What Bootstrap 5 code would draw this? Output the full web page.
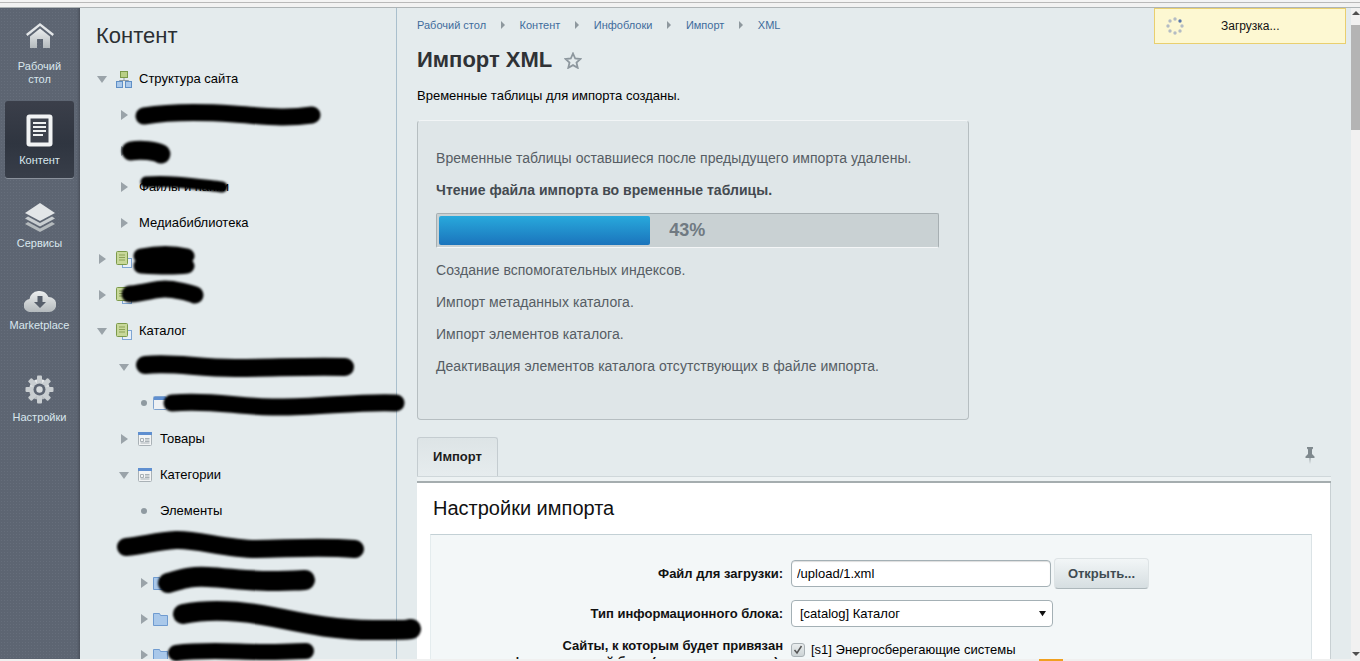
<!DOCTYPE html>
<html lang="ru">
<head>
<meta charset="utf-8">
<title>Импорт XML</title>
<link href="https://cdn.jsdelivr.net/npm/bootstrap@5.3.0/dist/css/bootstrap.min.css" rel="stylesheet">
<style>
html,body{height:661px;overflow:hidden;margin:0;background:#fff;font-family:"Liberation Sans",Arial,sans-serif;font-size:13px;color:#000}
.shell{height:661px;position:relative;display:flex;flex-direction:column}
.chrome-top{height:8px;flex:none;background:linear-gradient(#f4f4f4 0,#f4f4f4 2px,#b9b9b9 2px,#b9b9b9 3px,#f2f2f2 3px,#f2f2f2 7px,#aeb4b6 7px)}
.stage{height:651px;flex:none;display:flex;overflow:hidden}
.chrome-bottom{height:2px;flex:none;background:#f0f0f0}
.rail{width:80px;flex:none;background-color:#5d6572;background-image:radial-gradient(#666e7b 1px,transparent 1px);background-size:3px 3px;box-shadow:inset -3px 0 3px -2px #444b56;padding:5px}
.rail-item{width:69px;color:#d9e7ee;font-size:11px;line-height:13px;text-align:center;display:flex;flex-direction:column;align-items:center;border-radius:3px}
.rail-item svg{display:block}
.r1{height:88px;padding-top:9px}.r1 svg{margin-bottom:11px}
.r2{height:77px;padding-top:13px;background:linear-gradient(#3b3f4a,#2f3540 55%,#383e49);box-shadow:0 1px 0 #8a919b}.r2 svg{margin-bottom:7px}
.r3{height:92px;padding-top:25px}.r3 svg{margin-bottom:5px}
.r4{height:88px;padding-top:18px}.r4 svg{margin-bottom:7px}
.r5{height:80px;padding-top:17px}.r5 svg{margin-bottom:7px}
.menu{width:317px;flex:none;background:#e4ebed;border-right:1px solid #a9bfcd;position:relative}
.menu-title{font-size:22px;line-height:26px;color:#2b2f33;padding:15px 0 12px 16px;margin:0;font-weight:400}
.node{height:36px;display:flex;align-items:center;font-size:13px;color:#000;white-space:nowrap}
.tw{width:10px;flex:none;display:flex;justify-content:center}
.ar{border-style:solid;border-color:transparent transparent transparent #9aa3a9;border-width:5px 0 5px 7px}
.ad{border-style:solid;border-color:#9aa3a9 transparent transparent;border-width:7px 5px 0}
.dot{width:6px;height:6px;border-radius:50%;background:#8f9aa1}
.lv0{padding-left:17px}.lv1{padding-left:39px}.lv2{padding-left:59px}
.node svg{flex:none}
.ml-icon{margin-left:9px;margin-right:7px}
.ml-icon2{margin-left:9px;margin-right:8px}
.ml-icon3{margin-left:4px}
.ml-text2{margin-left:10px}
.ml-text3{margin-left:11px}
.main{flex:1;min-width:0;background:#e4ebed;padding:0 20px;overflow:hidden}
.crumbs{display:flex;align-items:center;height:34px;font-size:11px;color:#3f6c9c;margin:0;padding:0;list-style:none}
.crumbs li{display:flex;align-items:center}
.crumbs li+li::before{content:"";border-style:solid;border-color:transparent transparent transparent #8e989e;border-width:4px 0 4px 4px;margin:0 15px 0 14.500px}
.h-title{font-size:22px;font-weight:700;line-height:26px;color:#2f3236;margin:5px 0 0;display:flex;align-items:center;gap:12px}
.created{margin:15px 0 0;line-height:16px;font-size:13px}
.box{width:552px;height:300px;margin-top:16px;background:#dfe6e8;border:1px solid #b6bec1;border-top-color:#f2f5f6;border-radius:4px;padding:29px 18px 0;font-size:14px;color:#565d64;letter-spacing:.04px}
.box p{margin:0 0 16px;line-height:16px}
.box .ph{font-weight:700;color:#444a50;margin-bottom:0}
.bar{width:503px;height:35px;margin:15px 0 14px;background:#c9d1d3;border:1px solid #a7afb2;border-bottom-color:#f4f6f7;border-radius:2px;padding:2px;display:flex;align-items:center}
.bar-fill{height:29px;background:linear-gradient(#28a9dc,#1b74bc);border-radius:2px}
.bar-txt{font-size:18px;font-weight:700;color:#707a82;margin-left:19px}
.tabs{width:914px;height:39px;margin-top:17px;display:flex;justify-content:space-between;align-items:stretch}
.tab1{width:81px;background:linear-gradient(#dde4e6,#e6ecee);border:1px solid #c4ccd0;border-bottom:0;border-radius:3px 3px 0 0;font-size:13px;font-weight:700;color:#1c1c1c;display:flex;align-items:center;justify-content:center}
.pin{margin:10px 16px 0 0}
.strip{height:7px;width:914px;background:#edf2f3;border-top:1px solid #cfd7da;border-bottom:2px solid #a5adaf}
.sheet{width:914px;height:200px;background:#fff;border-right:1px solid #c8d0d3;padding:0 18px 0 13px}
.sheet-h{font-size:20px;font-weight:400;line-height:24px;color:#111;margin:0;padding:13px 0 14px 3px}
.inner{background:#f3f7f8;border-top:1px solid #c3d0d5;border-right:1px solid #dbe3e6;border-left:1px solid #e4ecee;height:150px;padding-top:23px}
.frow{display:flex;align-items:center;gap:8px}
.frow label{width:352px;flex:none;text-align:right;font-weight:700;font-size:13px;line-height:16px;color:#111}
.form-control.fld{width:260px;height:27px;font-size:13px;padding:0 5px;border:1px solid #a4b0b5;border-radius:4px;color:#000;font-family:inherit;box-shadow:inset 0 1px 1px #ddd}
.btn.opn{width:95px;height:31px;margin-left:-5px;padding:0;font-size:13px;font-weight:700;color:#3f4b52;background:linear-gradient(#f2f6f7,#d6dee1);border:1px solid #dde3e5;border-bottom-color:#adb7bb;border-radius:4px}
.form-select.sel{width:262px;height:27px;font-size:13px;padding:0 8px;border:1px solid #a4b0b5;border-radius:4px;color:#000;background-position:right 6px center;background-size:7px;background-image:url("data:image/svg+xml,%3csvg xmlns='http://www.w3.org/2000/svg' viewBox='0 0 8 8'%3e%3cpath d='M0 1h8L4 7z' fill='%23111'/%3e%3c/svg%3e")}
.row-a{margin-bottom:11px}
.frow.row-c{align-items:flex-start;margin-top:1px}
.frow.row-c label{padding-left:37px}
.chk{display:flex;align-items:center;gap:6px;margin-top:4px;line-height:16px}
.box-c{width:14px;height:14px;border:1px solid #a9b1b5;border-radius:3px;background:linear-gradient(#e9edee,#cdd4d6);display:flex;align-items:center;justify-content:center}
.scrollbar{width:9px;flex:none;background:#f1f1f1;position:relative;display:flex;flex-direction:column;align-items:center}
.s-up{border-style:solid;border-color:transparent transparent #505050;border-width:0 4px 4px;margin-top:3px}
.s-thumb{width:9px;height:105px;background:#b4b4b4;margin-top:10px}
.s-dn{border-style:solid;border-color:#505050 transparent transparent;border-width:4px 4px 0;margin-top:auto;margin-bottom:3px}
.loading{position:absolute;left:1154px;top:8px;width:192px;height:36px;background:#fdf8d2;border:1px solid #e9cf6f;font-size:12px;color:#111;display:flex;align-items:center}
.loading svg{margin-left:11px}
.loading span{margin-left:37px}
.redact{position:absolute;left:0;top:0;pointer-events:none;filter:blur(.8px)}
.orange{position:absolute;left:1039px;top:659px;width:24px;height:2px;background:#f0a020}
</style>
</head>
<body>
<svg width="0" height="0" class="position-absolute"><defs>
  <linearGradient id="ig" x1="0" y1="0" x2="0" y2="1"><stop offset="0" stop-color="#eceeef"/><stop offset="1" stop-color="#b4babd"/></linearGradient>
</defs></svg>
<div class="shell">
  <div class="chrome-top"></div>
  <div class="stage">
    <nav class="rail">
      <div class="rail-item r1">
        <svg width="30" height="27" viewBox="0 0 30 27"><path d="M15 1 1 12l1.500 2L15 4l12.500 10 1.500-2z" fill="#e3e6e8"/><path d="M5 14.500 15 6.500l10 8V26H18V17h-6v9H5z" fill="url(#ig)"/></svg>
        <span>Рабочий<br>стол</span>
      </div>
      <div class="rail-item r2">
        <svg width="27" height="33" viewBox="0 0 27 33"><rect x="0.500" y="0.500" width="26" height="32" rx="3" fill="#f1f3f4"/><rect x="4.500" y="4.500" width="18" height="24" fill="#3d424d"/><path d="M7 9h13M7 13h13M7 17h13M7 21h10" stroke="#eef0f1" stroke-width="1.800"/></svg>
        <span>Контент</span>
      </div>
      <div class="rail-item r3">
        <svg width="32" height="29" viewBox="0 0 32 29"><path d="M16 18 1 10 16 0l15 10z" fill="#e3e6e8"/><path d="M4 13.500 1 15.500l15 8 15-8-3-2-12 6.500z" fill="#c9ced1"/><path d="M4 19 1 21l15 8 15-8-3-2-12 6.500z" fill="#b4babd"/></svg>
        <span>Сервисы</span>
      </div>
      <div class="rail-item r4">
        <svg width="32" height="24" viewBox="0 0 32 24"><path d="M7 24a6.500 6.500 0 0 1-1.500-13A10 10 0 0 1 24.500 9 7.500 7.500 0 0 1 25 24z" fill="url(#ig)"/><path d="M13.500 8h5v6h3.500L16 20l-6-6h3.500z" fill="#565e6b"/></svg>
        <span>Marketplace</span>
      </div>
      <div class="rail-item r5">
        <svg width="29" height="29" viewBox="0 0 29 29"><g fill="url(#ig)"><circle cx="14.500" cy="14.500" r="10.500"/></g><g fill="#c9ced1"><rect x="12" y="0.500" width="5" height="28" rx="1"/><rect x="12" y="0.500" width="5" height="28" rx="1" transform="rotate(45 14.500 14.500)"/><rect x="12" y="0.500" width="5" height="28" rx="1" transform="rotate(90 14.500 14.500)"/><rect x="12" y="0.500" width="5" height="28" rx="1" transform="rotate(135 14.500 14.500)"/></g><circle cx="14.500" cy="14.500" r="6" fill="#5d6572"/><circle cx="14.500" cy="14.500" r="3.200" fill="#d8dcde"/></svg>
        <span>Настройки</span>
      </div>
    </nav>

    <aside class="menu">
      <h2 class="menu-title">Контент</h2>
      <div class="node lv0"><span class="tw"><i class="ad"></i></span>
        <svg class="ml-icon" width="16" height="17" viewBox="0 0 16 17"><rect x="4.500" y="0.500" width="7" height="6" fill="#b9cf86" stroke="#7c9a4a"/><path d="M8 7v2.500M3.500 11V9.500h9V11" stroke="#8f9aa1" fill="none"/><rect x="0.500" y="10.500" width="6" height="6" fill="#a9c8ea" stroke="#5f8fc6"/><rect x="9.500" y="10.500" width="6" height="6" fill="#a9c8ea" stroke="#5f8fc6"/></svg>
        <span>Структура сайта</span></div>
      <div class="node lv1"><span class="tw"><i class="ar"></i></span></div>
      <div class="node lv1"><span class="tw"><i class="ar"></i></span></div>
      <div class="node lv1"><span class="tw"><i class="ar"></i></span><span class="ml-text2">Файлы и папки</span></div>
      <div class="node lv1"><span class="tw"><i class="ar"></i></span><span class="ml-text2">Медиабиблиотека</span></div>
      <div class="node lv0"><span class="tw"><i class="ar"></i></span>
        <svg class="ml-icon" width="16" height="17" viewBox="0 0 16 17"><rect x="6.500" y="7.500" width="9" height="9" fill="#e9f0f8" stroke="#7fa6d4"/><rect x="0.500" y="0.500" width="11" height="13" rx="1" fill="#c8d89a" stroke="#7c9a4a"/><path d="M3 4h6M3 6.500h6M3 9h6" stroke="#8ba257"/></svg></div>
      <div class="node lv0"><span class="tw"><i class="ar"></i></span>
        <svg class="ml-icon" width="16" height="17" viewBox="0 0 16 17"><rect x="6.500" y="7.500" width="9" height="9" fill="#e9f0f8" stroke="#7fa6d4"/><rect x="0.500" y="0.500" width="11" height="13" rx="1" fill="#c8d89a" stroke="#7c9a4a"/><path d="M3 4h6M3 6.500h6M3 9h6" stroke="#8ba257"/></svg></div>
      <div class="node lv0"><span class="tw"><i class="ad"></i></span>
        <svg class="ml-icon" width="16" height="17" viewBox="0 0 16 17"><rect x="6.500" y="7.500" width="9" height="9" fill="#e9f0f8" stroke="#7fa6d4"/><rect x="0.500" y="0.500" width="11" height="13" rx="1" fill="#c8d89a" stroke="#7c9a4a"/><path d="M3 4h6M3 6.500h6M3 9h6" stroke="#8ba257"/></svg>
        <span>Каталог</span></div>
      <div class="node lv1"><span class="tw"><i class="ad"></i></span></div>
      <div class="node lv2"><span class="tw"><i class="dot"></i></span>
        <svg class="ml-icon3" width="14" height="14" viewBox="0 0 14 14"><rect x="0.500" y="0.500" width="13" height="13" rx="1" fill="#eef1f3" stroke="#7fa3cf"/><rect x="1" y="1" width="12" height="3" fill="#5f8fd0"/></svg></div>
      <div class="node lv1"><span class="tw"><i class="ar"></i></span>
        <svg class="ml-icon2" width="14" height="14" viewBox="0 0 14 14"><rect x="0.500" y="0.500" width="13" height="13" rx="1" fill="#f2f4f5" stroke="#a9b1b6"/><rect x="0" y="0" width="14" height="3" fill="#5f8fd0"/><path d="M2.500 6.500h3v3h-3zM7 6.500h4.500M7 8h4.500M7 9.500h4.500M2.500 11h9" stroke="#a9b1b6" fill="none"/></svg>
        <span>Товары</span></div>
      <div class="node lv1"><span class="tw"><i class="ad"></i></span>
        <svg class="ml-icon2" width="14" height="14" viewBox="0 0 14 14"><rect x="0.500" y="0.500" width="13" height="13" rx="1" fill="#f2f4f5" stroke="#a9b1b6"/><rect x="0" y="0" width="14" height="3" fill="#5f8fd0"/><path d="M2.500 6.500h3v3h-3zM7 6.500h4.500M7 8h4.500M7 9.500h4.500M2.500 11h9" stroke="#a9b1b6" fill="none"/></svg>
        <span>Категории</span></div>
      <div class="node lv2"><span class="tw"><i class="dot"></i></span><span class="ml-text3">Элементы</span></div>
      <div class="node lv1"></div>
      <div class="node lv2"><span class="tw"><i class="ar"></i></span>
        <svg class="ml-icon3" width="15" height="14" viewBox="0 0 15 14"><path d="M.5 13.500V1.500h6l1 2h7v10z" fill="#a9c8ea" stroke="#6f9bd0"/></svg></div>
      <div class="node lv2"><span class="tw"><i class="ar"></i></span>
        <svg class="ml-icon3" width="15" height="14" viewBox="0 0 15 14"><path d="M.5 13.500V1.500h6l1 2h7v10z" fill="#a9c8ea" stroke="#6f9bd0"/></svg></div>
      <div class="node lv2"><span class="tw"><i class="ar"></i></span>
        <svg class="ml-icon3" width="15" height="14" viewBox="0 0 15 14"><path d="M.5 13.500V1.500h6l1 2h7v10z" fill="#a9c8ea" stroke="#6f9bd0"/></svg></div>
    </aside>

    <main class="main">
      <ol class="crumbs">
        <li>Рабочий стол</li><li>Контент</li><li>Инфоблоки</li><li>Импорт</li><li>XML</li>
      </ol>
      <h1 class="h-title">Импорт XML
        <svg width="18" height="17" viewBox="0 0 18 17"><path d="M9 1.500l2.200 5 5.300.5-4 3.600 1.200 5.200L9 13.100l-4.700 2.700 1.200-5.200-4-3.600 5.300-.5z" fill="none" stroke="#8d979e" stroke-width="1.800"/></svg>
      </h1>
      <p class="created">Временные таблицы для импорта созданы.</p>
      <div class="box">
        <p>Временные таблицы оставшиеся после предыдущего импорта удалены.</p>
        <p class="ph">Чтение файла импорта во временные таблицы.</p>
        <div class="bar"><div class="bar-fill" style="width:42.5%"></div><span class="bar-txt">43%</span></div>
        <p>Создание вспомогательных индексов.</p>
        <p>Импорт метаданных каталога.</p>
        <p>Импорт элементов каталога.</p>
        <p>Деактивация элементов каталога отсутствующих в файле импорта.</p>
      </div>
      <div class="tabs">
        <div class="tab1">Импорт</div>
        <svg class="pin" width="10" height="17" viewBox="0 0 10 17"><path d="M2 0h6v1.500L7 2.500V7l2.500 2.500V11H5.500L5 17l-.5-6H.5V9.500L3 7V2.500L2 1.500z" fill="#7f898e"/></svg>
      </div>
      <div class="strip"></div>
      <div class="sheet">
        <h2 class="sheet-h">Настройки импорта</h2>
        <div class="inner">
          <div class="frow row-a"><label for="f1">Файл для загрузки:</label><input id="f1" class="form-control fld" value="/upload/1.xml"><button class="btn opn" type="button">Открыть...</button></div>
          <div class="frow row-a"><label for="f2">Тип информационного блока:</label><select id="f2" class="form-select sel"><option>[catalog] Каталог</option></select></div>
          <div class="frow row-c"><label>Сайты, к которым будет привязан информационный блок (если он создается):</label>
            <div class="chk"><span class="box-c"><svg width="10" height="10" viewBox="0 0 10 10"><path d="M1.500 5 4 8l4.500-7" fill="none" stroke="#555" stroke-width="1.500"/></svg></span><span>[s1] Энергосберегающие системы</span></div></div>
        </div>
      </div>
    </main>
    <div class="scrollbar"><i class="s-up"></i><i class="s-thumb"></i><i class="s-dn"></i></div>
  </div>
  <div class="chrome-bottom"></div>
  <div class="orange"></div>
  <div class="loading">
    <svg width="18" height="18" viewBox="0 0 18 18"><g fill="#b4bcc4"><circle cx="9" cy="2" r="1.700"/><circle cx="4" cy="4" r="1.700"/><circle cx="2" cy="9" r="1.700"/><circle cx="4" cy="14" r="1.700"/><circle cx="9" cy="16" r="1.700"/><circle cx="14" cy="14" r="1.700"/><circle cx="16" cy="9" r="1.700"/></g><circle cx="14" cy="4" r="1.700" fill="#5a78ab"/></svg>
    <span>Загрузка...</span>
  </div>
  <svg class="redact" width="1360" height="661" viewBox="0 0 1360 661" fill="none" stroke="#000" stroke-linecap="round" stroke-linejoin="round">
    <path d="M144 116c30-5 60-4 90-2s50 5 78 1" stroke-width="17"/>
    <path d="M131 151c10-2 25 0 30 3" stroke-width="19"/>
    <path d="M146 182c25-2 50 2 76 5" stroke-width="11"/>
    <path d="M141 256c15-3 30-4 46 0M141 266c15 1 30 2 46 0" stroke-width="15"/>
    <path d="M130 294c15-1 25-5 35-5s25 4 30 6" stroke-width="17"/>
    <path d="M145 365c30-3 50 3 90 3s70-2 110-1" stroke-width="18"/>
    <path d="M172 403c40-3 60 3 100 4s90-6 124-4" stroke-width="17"/>
    <path d="M126 547c20-2 30-6 50-7s50 9 80 9 60-3 99 0" stroke-width="18"/>
    <path d="M168 583c15-4 20-7 40-6s50 5 70 4 15 0 27-1" stroke-width="20"/>
    <path d="M183 614c30-6 60-3 90 3s60 13 100 13 30 0 38-1" stroke-width="20"/>
    <path d="M176 653c30-4 60-1 90-1s30-1 40-1" stroke-width="16"/>
  </svg>
</div>
</body>
</html>
